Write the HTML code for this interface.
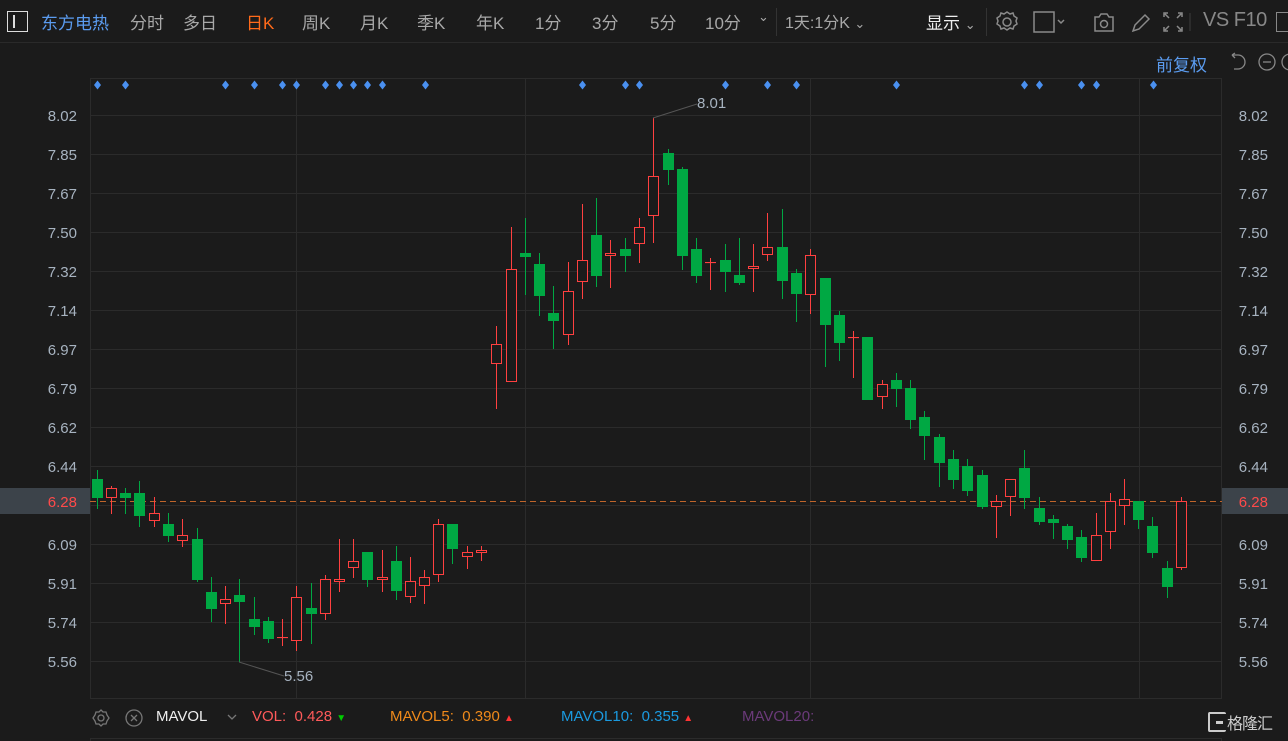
<!DOCTYPE html>
<html><head><meta charset="utf-8"><style>
*{margin:0;padding:0;box-sizing:border-box}
body{width:1288px;height:741px;background:#1b1b1b;overflow:hidden;font-family:"Liberation Sans","Noto Sans CJK SC",sans-serif;position:relative;color:#b8b8b8}
.t{position:absolute;white-space:nowrap}
.top{position:absolute;left:0;top:0;width:1288px;height:43px;border-bottom:1px solid #2a2a2a}
.top .t{top:9px;font-size:17px;color:#a8a8a8}
.ax{position:absolute;font-size:15px;color:#a7b3c0;width:40px;text-align:right}
.bot .t{top:708px;font-size:15px}
</style></head><body>
<div class="top">
<div class="t" style="left:7px;top:11px;width:21px;height:21px;border:1.5px solid #ddd;"></div>
<div class="t" style="left:13px;top:15px;width:2px;height:13px;background:#ddd"></div>
<div class="t" style="left:41px;color:#5b9cf0">东方电热</div>
<div class="t" style="left:130px">分时</div>
<div class="t" style="left:183px">多日</div>
<div class="t" style="left:246px;color:#ff6a1a">日K</div>
<div class="t" style="left:302px">周K</div>
<div class="t" style="left:360px">月K</div>
<div class="t" style="left:417px">季K</div>
<div class="t" style="left:476px">年K</div>
<div class="t" style="left:535px">1分</div>
<div class="t" style="left:592px">3分</div>
<div class="t" style="left:650px">5分</div>
<div class="t" style="left:705px">10分</div>
<div class="t" style="left:758px;font-size:13px">⌄</div>
<div class="t" style="left:776px;top:8px;width:1px;height:28px;background:#333"></div>
<div class="t" style="left:785px;font-size:16px">1天:1分K <span style="font-size:13px">⌄</span></div>
<div class="t" style="left:926px;color:#eee">显示 <span style="font-size:13px;color:#aaa">⌄</span></div>
<div class="t" style="left:986px;top:8px;width:1px;height:28px;background:#333"></div>
<svg class="t" style="left:993px;top:9px" width="200" height="26" viewBox="0 0 200 26" fill="none" stroke="#8a8a8a" stroke-width="1.5">
<circle cx="14" cy="13" r="4"/><path d="M14 3l3 2 3-1 1 3 3 2-1 3 1 3-3 2-1 3-3-1-3 2-3-2-3 1-1-3-3-2 1-3-1-3 3-2 1-3 3 1z"/>
<rect x="41" y="3" width="20" height="20"/><path d="M65 11l3 3 3-3"/>
<path d="M102 8h4l2-3h6l2 3h4v14h-18z"/><circle cx="111" cy="15" r="3.5"/>
<path d="M140 22l2-6 10-10 4 4-10 10z"/>
<path d="M175 4h-4v4M185 4h4v4M175 22h-4v-4M185 22h4v-4M172 5l4 4M188 5l-4 4M172 21l4-4M188 21l-4-4"/>
<path d="M197 4v18" stroke="#333"/>
</svg>
<div class="t" style="left:1203px;font-size:20px;top:9px;color:#888;letter-spacing:-0.5px">VS F10</div>
<div class="t" style="left:1276px;top:12px;width:14px;height:20px;border:1.5px solid #888"></div>
</div>
<div class="t" style="left:1156px;top:51px;font-size:17px;color:#5b9cf0">前复权</div>
<svg class="t" style="left:1226px;top:51px" width="62" height="22" fill="none" stroke="#888" stroke-width="1.3"><path d="M6 4h6a7 7 0 0 1 0 14H8M6 4l3-2M6 4l3 3"/><circle cx="41" cy="11" r="8"/><path d="M37 11h8"/><circle cx="64" cy="11" r="8"/></svg>

<svg class="t" style="left:0;top:0" width="1288" height="741" id="ch">
<g stroke="#2b2b2b" stroke-width="1">
<line x1="90.5" y1="78" x2="90.5" y2="699"/><line x1="1221.5" y1="78" x2="1221.5" y2="699"/>
<line x1="90" y1="78.5" x2="1222" y2="78.5"/><line x1="90" y1="698.5" x2="1222" y2="698.5"/>
<line x1="296.5" y1="78" x2="296.5" y2="699"/><line x1="525.5" y1="78" x2="525.5" y2="699"/>
<line x1="810.5" y1="78" x2="810.5" y2="699"/><line x1="1139.5" y1="78" x2="1139.5" y2="699"/>
<line x1="90" y1="738.5" x2="1222" y2="738.5"/>
<line x1="90.5" y1="738" x2="90.5" y2="741"/><line x1="1221.5" y1="738" x2="1221.5" y2="741"/>
</g>
<g id="grid" stroke="#2b2b2b"></g>
<rect x="0" y="488" width="90" height="26" fill="#3c434a"/>
<rect x="1222" y="488" width="66" height="26" fill="#3c434a"/>
<line x1="90" y1="501.5" x2="1222" y2="501.5" stroke="#c0652a" stroke-dasharray="6,4"/>
<g id="c"></g>
<path d="M653 118 L697 104" stroke="#555" fill="none"/>
<path d="M239 662 L284 676" stroke="#555" fill="none"/>
<g id="dots" fill="#4a90f0"></g>
</svg>
<div class="t" style="left:697px;top:95px;font-size:15px;color:#a7b3c0">8.01</div>
<div class="t" style="left:284px;top:668px;font-size:15px;color:#a7b3c0">5.56</div>

<div class="ax" style="left:37px;top:108px">8.02</div><div class="ax" style="left:1228px;top:108px">8.02</div>
<div class="ax" style="left:37px;top:147px">7.85</div><div class="ax" style="left:1228px;top:147px">7.85</div>
<div class="ax" style="left:37px;top:186px">7.67</div><div class="ax" style="left:1228px;top:186px">7.67</div>
<div class="ax" style="left:37px;top:225px">7.50</div><div class="ax" style="left:1228px;top:225px">7.50</div>
<div class="ax" style="left:37px;top:264px">7.32</div><div class="ax" style="left:1228px;top:264px">7.32</div>
<div class="ax" style="left:37px;top:303px">7.14</div><div class="ax" style="left:1228px;top:303px">7.14</div>
<div class="ax" style="left:37px;top:342px">6.97</div><div class="ax" style="left:1228px;top:342px">6.97</div>
<div class="ax" style="left:37px;top:381px">6.79</div><div class="ax" style="left:1228px;top:381px">6.79</div>
<div class="ax" style="left:37px;top:420px">6.62</div><div class="ax" style="left:1228px;top:420px">6.62</div>
<div class="ax" style="left:37px;top:459px">6.44</div><div class="ax" style="left:1228px;top:459px">6.44</div>
<div class="ax" style="left:37px;top:494px;color:#ff4a4a">6.28</div><div class="ax" style="left:1228px;top:494px;color:#ff4a4a">6.28</div>
<div class="ax" style="left:37px;top:537px">6.09</div><div class="ax" style="left:1228px;top:537px">6.09</div>
<div class="ax" style="left:37px;top:576px">5.91</div><div class="ax" style="left:1228px;top:576px">5.91</div>
<div class="ax" style="left:37px;top:615px">5.74</div><div class="ax" style="left:1228px;top:615px">5.74</div>
<div class="ax" style="left:37px;top:654px">5.56</div><div class="ax" style="left:1228px;top:654px">5.56</div>

<div class="bot">
<svg class="t" style="left:91px;top:707px" width="150" height="22" fill="none" stroke="#777" stroke-width="1.3"><circle cx="10" cy="11" r="3"/><path d="M10 3l2 2h3l1 3 2 3-2 3-1 3h-3l-2 2-2-2H5l-1-3-2-3 2-3 1-3h3z"/><circle cx="43" cy="11" r="8"/><path d="M40 8l6 6M46 8l-6 6"/><path d="M137 8l4 4 4-4"/></svg>
<div class="t" style="left:156px;color:#eee">MAVOL</div>
<div class="t" style="left:252px;color:#ff5a5a">VOL: &nbsp;0.428 <span style="color:#0c0;font-size:10px">▼</span></div>
<div class="t" style="left:390px;color:#f08a1a">MAVOL5: &nbsp;0.390 <span style="color:#f33;font-size:10px">▲</span></div>
<div class="t" style="left:561px;color:#1a9ae0">MAVOL10: &nbsp;0.355 <span style="color:#f33;font-size:10px">▲</span></div>
<div class="t" style="left:742px;color:#6b3a7a">MAVOL20:</div>
<div class="t" style="left:1208px;top:712px;width:18px;height:20px;border:2.5px solid #ccc;border-right:none;border-radius:2px"></div>
<div class="t" style="left:1216px;top:721px;width:7px;height:3px;background:#ccc"></div>
<div class="t" style="left:1227px;top:710px;font-size:16px;color:#ccc;letter-spacing:-1px">格隆汇</div>
</div>
<script>
var g=document.getElementById('grid'),s='';
for(var i=0;i<15;i++){var y=115+39*i+0.5;s+='<line x1="90" y1="'+y+'" x2="1222" y2="'+y+'"/>';}
g.innerHTML=s;
var C=[[97,'g',479,498,470,509],[111,'r',488,498,486,514],[125,'g',493,498,488,514],[139,'g',493,516,481,527],[154,'r',513,521,497,527],[168,'g',524,536,513,542],[182,'r',535,541,519,547],[197,'g',539,580,528,582],[211,'g',592,609,577,622],[225,'r',599,604,586,624],[239,'g',595,602,579,662],[254,'g',619,627,597,635],[268,'g',621,639,617,643],[282,'r',637,637,619,646],[296,'r',597,641,586,651],[311,'g',608,614,583,644],[325,'r',579,614,575,620],[339,'r',579,582,539,592],[353,'r',561,568,539,578],[367,'g',552,580,552,587],[382,'r',577,580,550,592],[396,'g',561,591,546,600],[410,'r',581,597,557,603],[424,'r',577,586,570,604],[438,'r',524,575,519,582],[452,'g',524,549,524,564],[467,'r',552,557,546,569],[481,'r',550,553,546,561],
[496,'r',344,364,326,409],[511,'r',269,382,227,382],[525,'g',253,257,218,295],[539,'g',264,296,253,316],[553,'g',313,321,286,349],[568,'r',291,335,262,345],[582,'r',260,282,204,299],[596,'g',235,276,198,287],[610,'r',253,256,240,288],[625,'g',249,256,238,272],[639,'r',227,244,218,263],[653,'r',176,216,118,243],[668,'g',153,170,149,185],[682,'g',169,256,167,270],[696,'g',249,276,238,283],[710,'r',262,262,258,290],[725,'g',260,272,244,292],[739,'g',275,283,238,285],[753,'r',266,269,244,292],[767,'r',247,255,213,261],[782,'g',247,281,209,299],[796,'g',273,294,269,322],[810,'r',255,295,249,314],
[825,'g',278,325,278,367],[839,'g',315,343,311,361],[853,'r',337,337,331,378],[867,'g',337,400,337,400],[882,'r',384,397,380,409],[896,'g',380,389,373,407],[910,'g',388,420,380,429],[924,'g',417,436,411,460],[939,'g',437,463,434,487],[953,'g',459,480,450,489],[967,'g',466,491,459,496],[982,'g',475,507,470,509],[996,'r',501,507,495,538],[1010,'r',479,497,479,516],[1024,'g',468,498,450,509],[1039,'g',508,522,497,525],[1053,'g',519,523,515,539],[1067,'g',526,540,524,549],[1081,'g',537,558,530,562],[1096,'r',535,561,513,561],[1110,'r',501,532,493,549],[1124,'r',499,506,479,525],[1138,'g',501,520,501,529],[1152,'g',526,553,517,558],[1167,'g',568,587,561,598],[1181,'r',501,568,497,570]];
s='';
C.forEach(function(c){var x=c[0],col=c[1]=='g'?'#00a843':'#ff4040';
s+='<line x1="'+(x+0.5)+'" y1="'+c[4]+'" x2="'+(x+0.5)+'" y2="'+c[5]+'" stroke="'+col+'"/>';
var h=Math.max(c[3]-c[2],1);
if(c[1]=='g')s+='<rect x="'+(x-5)+'" y="'+c[2]+'" width="11" height="'+h+'" fill="'+col+'"/>';
else s+='<rect x="'+(x-4.5)+'" y="'+(c[2]+0.5)+'" width="10" height="'+(h-1>0?h-1:0.1)+'" fill="#1b1b1b" stroke="'+col+'"/>';});
document.getElementById('c').innerHTML=s;
var D=[97,125,225,254,282,296,325,339,353,367,382,425,582,625,639,725,767,796,896,1024,1039,1081,1096,1153];s='';
D.forEach(function(x){s+='<path d="M'+(x+0.5)+' 80.5l3.5 4.5-3.5 4.5-3.5-4.5z"/>';});
document.getElementById('dots').innerHTML=s;
</script>
</body></html>
